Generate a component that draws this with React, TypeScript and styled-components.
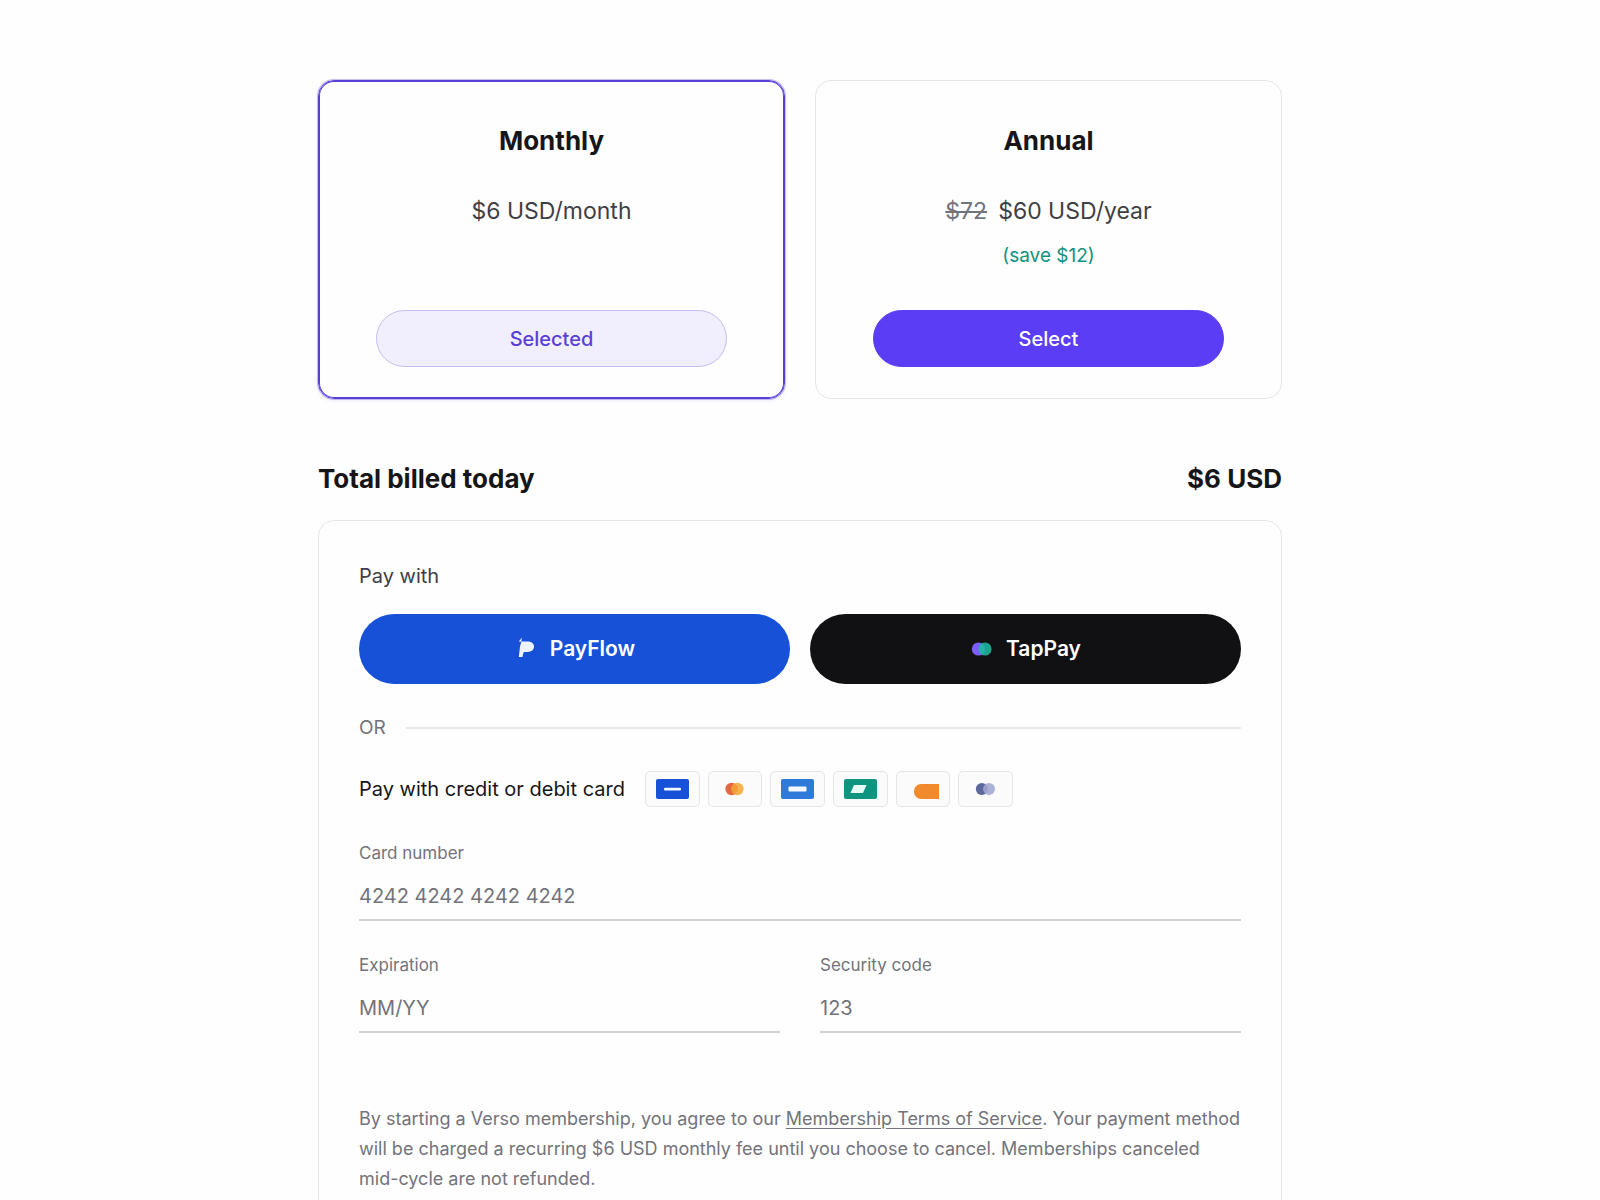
import React, { useState } from "react";
import styled, { createGlobalStyle, css } from "styled-components";

const GlobalStyle = createGlobalStyle`
  *, *::before, *::after { box-sizing: border-box; }
  body {
    margin: 0;
    background: #fefefe;
    color: #161618;
    font-family: Inter, "Liberation Sans", sans-serif;
    font-size: 20px;
    line-height: 28px;
  }
  h2, p { margin: 0; }
`;

const Page = styled.main`
  max-width: 1004px;
  margin: 0 auto;
  padding: 80px 20px;
`;

const Plans = styled.section`
  display: grid;
  grid-template-columns: repeat(auto-fit, minmax(320px, 1fr));
  gap: 30px;
`;

const PlanCard = styled.article<{ $selected: boolean }>`
  display: flex;
  flex-direction: column;
  align-items: center;
  padding: 42px 57px 31px;
  border: 1px solid #e6e6e8;
  border-radius: 16px;
  text-align: center;
  ${(p) =>
    p.$selected &&
    css`
      border-color: #5a3fd6;
      box-shadow: inset 0 0 0 1px #5a3fd6, 0 0 0 1px rgba(90, 63, 214, 0.3),
        0 1px 4px rgba(90, 63, 214, 0.14);
    `}
`;

const Heading = styled.h2`
  font-size: 26px;
  line-height: 36px;
  font-weight: 700;
`;

const Price = styled.p`
  display: flex;
  gap: 11px;
  margin-top: 36px;
  font-size: 23px;
  line-height: 32px;
  color: #3f3f44;
`;

const OldPrice = styled.s`
  color: #73737b;
`;

const Saving = styled.p`
  margin-top: 15px;
  font-size: 19px;
  color: #0f9480;
`;

const PlanButton = styled.button<{ $selected: boolean }>`
  width: 100%;
  height: 57px;
  margin-top: auto;
  border: 1px solid ${(p) => (p.$selected ? "#c6bdf0" : "#5b3df5")};
  border-radius: 29px;
  background: ${(p) => (p.$selected ? "#f1eefe" : "#5b3df5")};
  color: ${(p) => (p.$selected ? "#5a3fd6" : "#ffffff")};
  font: 500 20px/28px Inter, sans-serif;
  cursor: pointer;
`;

const PlanDetails = styled.div`
  display: flex;
  flex-direction: column;
  align-items: center;
  min-height: 147px;
  margin-bottom: 40px;
`;

const Total = styled.section`
  display: flex;
  justify-content: space-between;
  margin: 62px 0 23px;
`;

const PaymentCard = styled.form`
  padding: 41px 40px;
  border: 1px solid #e6e6e8;
  border-radius: 16px;
`;

const PayWith = styled.p`
  color: #3f3f44;
`;

const Wallets = styled.div`
  display: grid;
  grid-template-columns: 1fr 1fr;
  gap: 20px;
  margin-top: 24px;
`;

const WalletButton = styled.button<{ $color: string }>`
  display: flex;
  align-items: center;
  justify-content: center;
  gap: 12px;
  height: 70px;
  border: 0;
  border-radius: 35px;
  background: ${(p) => p.$color};
  color: #ffffff;
  font: 600 21px/28px Inter, sans-serif;
  cursor: pointer;
`;

const Divider = styled.div`
  display: flex;
  align-items: center;
  gap: 20px;
  margin: 30px 0 29px;
  font-size: 19px;
  color: #73737b;

  &::after {
    content: "";
    flex: 1;
    height: 2px;
    background: #e9e9eb;
  }
`;

const CardRow = styled.div`
  display: flex;
  flex-wrap: wrap;
  align-items: center;
  gap: 20px;
`;

const Brands = styled.ul`
  display: grid;
  grid-template-columns: repeat(6, 1fr);
  gap: 8px;
  width: 368px;
  margin: 0;
  padding: 0;
  list-style: none;
`;

const Brand = styled.li`
  display: flex;
  align-items: center;
  justify-content: center;
  height: 36px;
  border: 1px solid #e6e6e8;
  border-radius: 5px;
  background: #fbfbfc;
`;

const Fields = styled.div`
  display: grid;
  grid-template-columns: 1fr 1fr;
  gap: 32px 40px;
  margin-top: 34px;
`;

const Field = styled.div<{ $wide?: boolean }>`
  display: flex;
  flex-direction: column;
  gap: 8px;
  grid-column: ${(p) => (p.$wide ? "1 / -1" : "auto")};
`;

const Label = styled.label`
  font-size: 17px;
  line-height: 24px;
  color: #73737b;
`;

const Input = styled.input`
  width: 100%;
  height: 48px;
  padding: 0;
  border: 0;
  border-bottom: 2px solid #d2d2d5;
  border-radius: 0;
  outline: none;
  background: transparent;
  color: #161618;
  font: 400 20px/28px Inter, sans-serif;

  &::placeholder {
    color: #73737b;
    opacity: 1;
  }
`;

const Legal = styled.p`
  margin-top: 71px;
  font-size: 18px;
  line-height: 30px;
  color: #73737b;
`;

const TermsLink = styled.a`
  color: inherit;
  text-underline-offset: 3px;
`;

const PayFlowLogo = () => (
  <svg width="24" height="24" viewBox="0 0 24 24" aria-hidden="true">
    <path d="M7.4 4.4H13.4C17.2 4.4 20 6 20 9.3C20 12.9 17.4 15 13.6 15H10.6C9.8 15 9.5 15.4 9.3 16.2L8.4 20H4.8L6 9.4Z" fill="#eef4ff" />
    <path d="M4.8 4.4L8 0.6L7.2 4.8Z" fill="#eef4ff" />
  </svg>
);

const TapPayLogo = () => (
  <svg width="24" height="24" viewBox="0 0 24 24" aria-hidden="true">
    <circle cx="8.4" cy="12" r="6.6" fill="#7c5cfc" />
    <circle cx="15" cy="12" r="6.6" fill="#1fb8a0" fillOpacity="0.88" />
  </svg>
);

const brands = [
  {
    name: "Blue stripe card",
    art: (
      <>
        <rect width="33" height="20" rx="2" fill="#1651d8" />
        <rect x="8" y="8.8" width="17" height="2.6" rx="1.2" fill="#f2f6ff" />
      </>
    ),
  },
  {
    name: "Twin circle card",
    art: (
      <>
        <circle cx="13.6" cy="10" r="6.2" fill="#e5673f" />
        <circle cx="19.4" cy="10" r="6.2" fill="#f2a734" fillOpacity="0.86" />
      </>
    ),
  },
  {
    name: "Sky card",
    art: (
      <>
        <rect width="33" height="20" rx="2" fill="#2f7ad9" />
        <rect x="7.5" y="7.5" width="18" height="5" rx="1" fill="#f5f9ff" />
      </>
    ),
  },
  {
    name: "Green card",
    art: (
      <>
        <rect width="33" height="20" rx="2" fill="#0f9480" />
        <path d="M10 6H22.5L19 14H6.5Z" fill="#e8fbf6" />
      </>
    ),
  },
  {
    name: "Orange card",
    art: <path d="M15.5 5H33V20H15.5C11 20 8 16.8 8 12.5C8 8.2 11 5 15.5 5Z" fill="#f08a2c" />,
  },
  {
    name: "Indigo card",
    art: (
      <>
        <circle cx="12.8" cy="10" r="6" fill="#5a689c" />
        <circle cx="20" cy="10" r="6" fill="#a0a6d0" fillOpacity="0.88" />
      </>
    ),
  },
];

export default function App() {
  const [plan, setPlan] = useState<"monthly" | "annual">("monthly");
  const monthly = plan === "monthly";

  return (
    <>
      <GlobalStyle />
      <Page>
        <Plans>
          <PlanCard $selected={monthly}>
            <PlanDetails>
              <Heading>Monthly</Heading>
              <Price>$6 USD/month</Price>
            </PlanDetails>
            <PlanButton type="button" $selected={monthly} onClick={() => setPlan("monthly")}>
              {monthly ? "Selected" : "Select"}
            </PlanButton>
          </PlanCard>
          <PlanCard $selected={!monthly}>
            <PlanDetails>
              <Heading>Annual</Heading>
              <Price>
                <OldPrice>$72</OldPrice>
                <span>$60 USD/year</span>
              </Price>
              <Saving>(save $12)</Saving>
            </PlanDetails>
            <PlanButton type="button" $selected={!monthly} onClick={() => setPlan("annual")}>
              {monthly ? "Select" : "Selected"}
            </PlanButton>
          </PlanCard>
        </Plans>

        <Total>
          <Heading>Total billed today</Heading>
          <Heading as="strong">{monthly ? "$6 USD" : "$60 USD"}</Heading>
        </Total>

        <PaymentCard>
          <PayWith>Pay with</PayWith>
          <Wallets>
            <WalletButton type="button" $color="#1651d8">
              <PayFlowLogo />
              PayFlow
            </WalletButton>
            <WalletButton type="button" $color="#111113">
              <TapPayLogo />
              TapPay
            </WalletButton>
          </Wallets>
          <Divider>OR</Divider>
          <CardRow>
            <p>Pay with credit or debit card</p>
            <Brands>
              {brands.map((b) => (
                <Brand key={b.name}>
                  <svg width="33" height="20" viewBox="0 0 33 20" aria-hidden="true">
                    {b.art}
                  </svg>
                </Brand>
              ))}
            </Brands>
          </CardRow>
          <Fields>
            <Field $wide>
              <Label htmlFor="card-number">Card number</Label>
              <Input id="card-number" inputMode="numeric" placeholder="4242 4242 4242 4242" />
            </Field>
            <Field>
              <Label htmlFor="expiration">Expiration</Label>
              <Input id="expiration" placeholder="MM/YY" />
            </Field>
            <Field>
              <Label htmlFor="security-code">Security code</Label>
              <Input id="security-code" inputMode="numeric" placeholder="123" />
            </Field>
          </Fields>
          <Legal>
            By starting a Verso membership, you agree to our{" "}
            <TermsLink href="#terms">Membership Terms of Service</TermsLink>. Your payment method
            will be charged a recurring ${monthly ? "6 USD monthly" : "60 USD yearly"} fee until you
            choose to cancel. Memberships canceled mid-cycle are not refunded.
          </Legal>
        </PaymentCard>
      </Page>
    </>
  );
}
